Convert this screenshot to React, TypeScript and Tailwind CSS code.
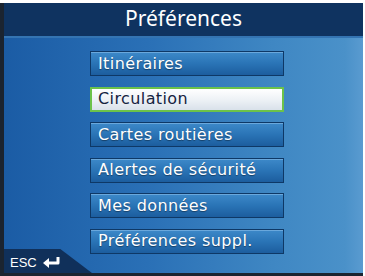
import React from "react";

const items = [
  "Itinéraires",
  "Circulation",
  "Cartes routières",
  "Alertes de sécurité",
  "Mes données",
  "Préférences suppl.",
];

export default function App() {
  return (
    <div className="w-[365px] h-[276px] bg-white pt-[3px] pr-[2px] overflow-hidden">
      <div className="relative w-full h-full flex flex-col border-l-4 border-b-[3px] border-[#1b2430] bg-[linear-gradient(90deg,#1b5ca5_0%,#2a70b6_40%,#3f87c3_75%,#4a91c9_95%,#5a9bd0_100%)]">
        <div className="h-[35px] bg-[#0f3360] flex items-center justify-center border-b-2 border-[#3474b2]">
          <span
            className="text-white text-[21px] leading-none pb-[2px]"
            style={{ fontFamily: '"Noto Sans", "Open Sans", sans-serif' }}
          >
            Préférences
          </span>
        </div>
        <div className="flex flex-col items-start pl-[86px] pt-[13px] gap-[10.5px]">
          {items.map((t) =>
            t === "Circulation" ? (
              <div
                key={t}
                className="w-[194px] h-[25px] flex items-center pl-[6px] border-2 border-[#6cc24a] bg-[linear-gradient(180deg,#ffffff_0%,#eef2f6_50%,#d9e1ea_100%)] text-[#15233f] text-[16px] tracking-[0.4px]"
                style={{ fontFamily: '"DejaVu Sans", Verdana, sans-serif' }}
              >
                {t}
              </div>
            ) : (
              <div
                key={t}
                className="w-[194px] h-[25px] flex items-center pl-[7px] border border-[#0e3866] shadow-[inset_0_1px_0_#6aa8dc] bg-[linear-gradient(180deg,#3d89c9_0%,#2a74b6_50%,#1c5d9e_100%)] text-white text-[16px] tracking-[0.4px] [text-shadow:0_1px_1px_rgba(0,0,0,0.4)]"
                style={{ fontFamily: '"DejaVu Sans", Verdana, sans-serif' }}
              >
                {t}
              </div>
            )
          )}
        </div>
        <div
          className="absolute left-0 bottom-0 w-[88px] h-[24px] bg-[#10305a] flex items-center pl-[6px] gap-[5px] [clip-path:polygon(0_0,64%_0,100%_100%,0_100%)]"
        >
          <span
            className="text-white text-[13px] leading-none pt-[3px]"
            style={{ fontFamily: '"Liberation Sans", Arial, sans-serif' }}
          >
            ESC
          </span>
          <svg width="20" height="13" viewBox="0 0 20 13" className="mt-[3px]">
            <path
              d="M16 1 L16 7 L6 7"
              fill="none"
              stroke="white"
              strokeWidth="3"
              strokeLinejoin="round"
            />
            <path d="M1 7 L7 2 L7 12 Z" fill="white" />
          </svg>
        </div>
      </div>
    </div>
  );
}
